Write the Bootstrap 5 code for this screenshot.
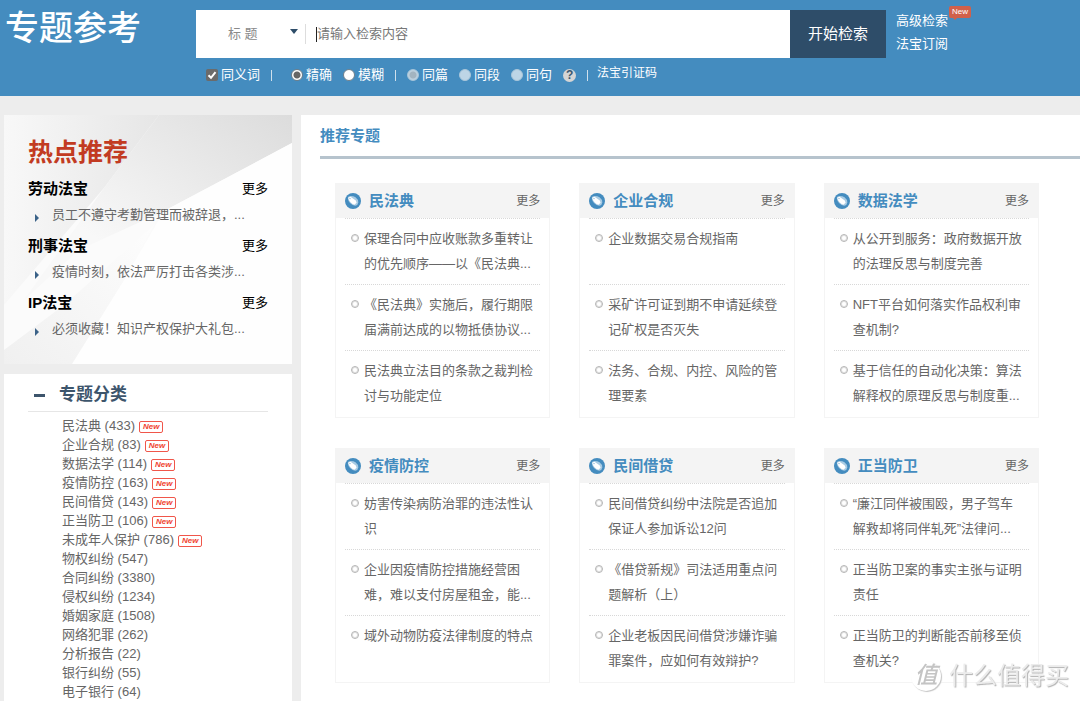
<!DOCTYPE html>
<html lang="zh-CN">
<head>
<meta charset="utf-8">
<meta name="viewport" content="width=device-width, initial-scale=1">
<title>专题参考</title>
<link href="https://cdn.jsdelivr.net/npm/bootstrap@5.3.0/dist/css/bootstrap.min.css" rel="stylesheet">
<style>
  body { font: 13px/26px "Liberation Sans", "Noto Sans CJK SC", sans-serif; background: #ededed; color: #666; }
  a { color: inherit; text-decoration: none; }
  a:hover { text-decoration: underline; }
  h1, h2, h3, ul { margin: 0; padding: 0; }
  ul { list-style: none; }

  /* header */
  .site-head { background: #448cbf; color: #fff; height: 96px; padding-top: 10px; }
  .site-title { width: 196px; padding-left: 5px; font-size: 34px; line-height: 37px; }
  .search-bar { height: 48px; background: #fff; }
  .field-pick { width: 109px; position: relative; }
  .field-pick select { appearance: none; width: 100%; border: 0; background: none; color: #8a8a8a; padding: 0 0 0 32px; height: 24px; outline: 0; }
  .field-pick svg { position: absolute; right: 7px; top: 8px; pointer-events: none; }
  .bar-line { width: 1px; height: 20px; background: #ddd; }
  .text-caret { width: 1px; height: 15px; background: #222; margin-left: 10px; }
  .search-bar input { border: 0; outline: 0; padding: 0; color: #333; }
  .search-bar input::placeholder { color: #777; }
  .go-btn { width: 96px; border: 0; background: #2e4d69; color: #fff; font-size: 15px; }
  .side-links { width: 194px; padding-left: 10px; line-height: 23px; margin-top: -1px; }
  .new-tip { position: absolute; left: 100%; top: -7px; height: 12px; padding: 0 3px; border-radius: 2px; background: #d1604a; color: #fff; font-size: 8px; line-height: 12px; margin-left: 1px; }
  .new-tip::after { content: ""; position: absolute; left: 3px; top: 11px; border: 3px solid transparent; border-top-color: #d1604a; border-bottom: 0; }
  .options { padding-left: 10px; margin-top: 4px; gap: 11px; }
  .choice-set { gap: 11px; }
  .choice { gap: 3px; }
  .choice input { appearance: none; width: 12px; height: 12px; margin: 0; background: #fff; }
  .choice input[type=radio] { border-radius: 50%; border: 1px solid #6f7f8b; }
  .choice input[type=radio]:checked { background: radial-gradient(circle, #666 0 3px, #fff 4px); }
  .choice input[type=radio]:disabled { border-color: #a9c6da; background: #bdd5e6; }
  .choice input[type=radio]:disabled:checked { background: radial-gradient(circle, #a3b4c0 0 3px, #bdd0de 4px); }
  .choice input[type=checkbox] { border-radius: 2px; background: #6b6b6b; }
  .tick-wrap { position: relative; height: 12px; display: flex; }
  .tick-wrap svg { position: absolute; left: 0; top: 0; pointer-events: none; }
  .sep { width: 1px; height: 11px; background: #cfe0ec; }
  .help-dot { width: 13px; height: 13px; padding: 0; border: 0; border-radius: 50%; background: #d5d5d5; color: #3c5870; font-size: 12px; font-weight: bold; line-height: 13px; }
  .cite-link { font-size: 12px; line-height: 22px; margin-left: -2px; align-self: flex-start; }

  /* sidebar */
  .page-body { padding: 19px 0 0 4px; gap: 9px; }
  .side { width: 288px; gap: 10px; }
  .hot { position: relative; padding: 20px 24px 22px; background: #fbfbfb; }
  .hot > svg { position: absolute; left: 0; top: 0; width: 100%; height: 100%; }
  .hot > div { position: relative; }
  .hot h2 { font-size: 25px; line-height: 34px; font-weight: bold; color: #c23b22; margin-bottom: 7px; }
  .hot-group + .hot-group { margin-top: 5px; }
  .hot h3 { font-size: 15px; line-height: 26px; font-weight: bold; }
  .hot-item { padding-left: 24px; position: relative; }
  .hot-item::before { content: ""; position: absolute; left: 7px; top: 12px; border: 4px solid transparent; border-left-color: #3b6288; border-right: 0; }
  .cats { background: #fff; padding: 0 24px; }
  .cats-head { height: 38px; padding: 5px 0 0 6px; gap: 14px; border: 0; border-bottom: 1px solid #e6e6e6; background: none; color: #3d556c; font-size: 17px; font-weight: bold; }
  .cats-head i { width: 11px; height: 3px; background: #3d556c; }
  .cats-list { padding: 4px 0 0 34px; line-height: 19px; }
  .new-box { height: 12px; padding: 0 3px; border: 1px solid #f0564a; border-radius: 2px; color: #f0432f; font-size: 8px; line-height: 10px; font-weight: bold; font-style: italic; margin: 2px 0 0 4px; }

  /* topic cards */
  .topics { background: #fff; min-width: 0; }
  .topics-title { margin-left: 19px; height: 44px; font-size: 15px; line-height: 41px; font-weight: bold; color: #448cbf; border-bottom: 3px solid #b6c3cd; }
  .topic-grid { display: grid; grid-template-columns: repeat(3, 1fr); gap: 30px 29px; padding: 24px 41px 18px 34px; }
  .topic { border: 1px solid #f4f4f4; padding-bottom: 1px; }
  .topic-head { height: 34px; background: #f4f4f4; padding: 0 9px; gap: 8px; }
  .topic-head h3 { font-size: 15px; line-height: 34px; font-weight: bold; color: #448cbf; }
  .topic-head .more { font-size: 12px; }
  .topic ul { padding: 0 9px; }
  .topic li { height: 66px; padding: 7px 4px 0 19px; border-top: 1px dotted #d8d8d8; line-height: 25px; position: relative; overflow: hidden; }
  .topic li::before { content: ""; position: absolute; left: 6px; top: 15px; width: 8px; height: 8px; border: 1px solid #b4b4b4; border-radius: 50%; box-shadow: inset 0 0 0 1px #e2e2e2; }

  .stamp { position: fixed; right: 11px; bottom: 10px; gap: 8px; font-size: 24px; line-height: 30px; color: #ececec; text-shadow: 1px 1px 1px #b0b0b0; pointer-events: none; }
  .stamp b { width: 30px; height: 30px; border-radius: 50%; background: #fff; box-shadow: 1px 1px 1px #c4c4c4; color: #c4c4c4; font-size: 23px; font-weight: 500; line-height: 28px; font-style: italic; text-align: center; text-shadow: none; }
</style>
</head>
<body class="min-vh-100 d-flex flex-column">

<svg class="d-none">
  <symbol id="tag" viewBox="0 0 16 16">
    <circle cx="8" cy="8" r="8" fill="#448cbf"/>
    <path d="M2.800 5Q3 3.500 4.500 3.200Q8 2.800 10.500 4.300Q13.500 6.500 13.300 9.500Q13 12.300 10.300 12.800Q7.500 12.500 5 10Q3 7.500 2.800 5Z" fill="#a9cbe3"/>
    <path d="M3.200 4.800L5.500 3.800L10.800 7.600L11.600 9.800L9.500 11.800Q7.500 11.300 5.500 9.300Q3.600 7.300 3.200 4.800Z" fill="#fff"/>
    <circle cx="5" cy="5.600" r=".7" fill="#7fb0d5"/>
  </symbol>
</svg>

<header class="site-head">
  <form class="d-flex" onsubmit="return false">
    <h1 class="site-title flex-shrink-0">专题参考</h1>
    <div class="flex-grow-1">
      <div class="search-bar d-flex align-items-center">
        <div class="field-pick flex-shrink-0">
          <select aria-label="检索字段"><option>标 题</option></select>
          <svg width="8" height="5"><path d="M0 0H8L4 5Z" fill="#2e4d69"/></svg>
        </div>
        <span class="bar-line"></span>
        <span class="text-caret"></span>
        <input class="flex-grow-1" type="text" aria-label="检索内容" placeholder="请输入检索内容">
        <button class="go-btn align-self-stretch" type="submit">开始检索</button>
      </div>
      <div class="options d-flex align-items-center">
        <label class="choice d-flex align-items-center"><span class="tick-wrap"><input type="checkbox" checked><svg width="12" height="12"><path d="M2.500 6.200L5 8.800L9.500 3.200" fill="none" stroke="#fff" stroke-width="2"/></svg></span>同义词</label>
        <span class="sep me-2"></span>
        <div class="choice-set d-flex">
          <label class="choice d-flex align-items-center"><input type="radio" name="match" checked>精确</label>
          <label class="choice d-flex align-items-center"><input type="radio" name="match">模糊</label>
        </div>
        <span class="sep"></span>
        <div class="choice-set d-flex">
          <label class="choice d-flex align-items-center"><input type="radio" name="scope" checked disabled>同篇</label>
          <label class="choice d-flex align-items-center"><input type="radio" name="scope" disabled>同段</label>
          <label class="choice d-flex align-items-center"><input type="radio" name="scope" disabled>同句</label>
        </div>
        <button class="help-dot" type="button">?</button>
        <span class="sep"></span>
        <a href="#" class="cite-link">法宝引证码</a>
      </div>
    </div>
    <div class="side-links flex-shrink-0">
      <div><a href="#" class="position-relative">高级检索<span class="new-tip">New</span></a></div>
      <div><a href="#">法宝订阅</a></div>
    </div>
  </form>
</header>

<div class="page-body d-flex flex-grow-1">
  <aside class="side d-flex flex-column flex-shrink-0">
    <section class="hot">
      <svg viewBox="0 0 288 249" preserveAspectRatio="none" aria-hidden="true">
        <defs>
          <linearGradient id="g1" x1="0" y1="1" x2="1" y2="0"><stop offset=".3" stop-color="#f8f8f8"/><stop offset="1" stop-color="#dcdcdc"/></linearGradient>
          <linearGradient id="g2" x1="0" y1="0" x2="1" y2="0"><stop offset="0" stop-color="#f8f8f8"/><stop offset="1" stop-color="#e6e6e6"/></linearGradient>
          <linearGradient id="g3" x1="0" y1="1" x2="1" y2="0"><stop offset="0" stop-color="#f0f0f0"/><stop offset="1" stop-color="#fdfdfd"/></linearGradient>
        </defs>
        <path d="M0 0H155L100 73L0 190Z" fill="url(#g2)"/>
        <path d="M155 0H288V28L160 96L75 135L20 185L100 73Z" fill="url(#g1)"/>
        <path d="M288 28V249H68L120 165L160 96Z" fill="#fefefe"/>
        <path d="M0 235L60 190L150 110L120 165L68 249H0Z" fill="url(#g3)"/>
      </svg>
      <div>
        <h2>热点推荐</h2>
        <div class="hot-group">
          <div class="d-flex justify-content-between text-black"><h3>劳动法宝</h3><a href="#">更多</a></div>
          <div class="hot-item text-nowrap"><a href="#">员工不遵守考勤管理而被辞退，...</a></div>
        </div>
        <div class="hot-group">
          <div class="d-flex justify-content-between text-black"><h3>刑事法宝</h3><a href="#">更多</a></div>
          <div class="hot-item text-nowrap"><a href="#">疫情时刻，依法严厉打击各类涉...</a></div>
        </div>
        <div class="hot-group">
          <div class="d-flex justify-content-between text-black"><h3>IP法宝</h3><a href="#">更多</a></div>
          <div class="hot-item text-nowrap"><a href="#">必须收藏！知识产权保护大礼包...</a></div>
        </div>
      </div>
    </section>
    <section class="cats flex-grow-1">
      <button class="cats-head d-flex align-items-center w-100" type="button"><i></i>专题分类</button>
      <ul class="cats-list">
        <li class="d-flex align-items-center"><a href="#">民法典 (433)</a><span class="new-box">New</span></li>
        <li class="d-flex align-items-center"><a href="#">企业合规 (83)</a><span class="new-box">New</span></li>
        <li class="d-flex align-items-center"><a href="#">数据法学 (114)</a><span class="new-box">New</span></li>
        <li class="d-flex align-items-center"><a href="#">疫情防控 (163)</a><span class="new-box">New</span></li>
        <li class="d-flex align-items-center"><a href="#">民间借贷 (143)</a><span class="new-box">New</span></li>
        <li class="d-flex align-items-center"><a href="#">正当防卫 (106)</a><span class="new-box">New</span></li>
        <li class="d-flex align-items-center"><a href="#">未成年人保护 (786)</a><span class="new-box">New</span></li>
        <li><a href="#">物权纠纷 (547)</a></li>
        <li><a href="#">合同纠纷 (3380)</a></li>
        <li><a href="#">侵权纠纷 (1234)</a></li>
        <li><a href="#">婚姻家庭 (1508)</a></li>
        <li><a href="#">网络犯罪 (262)</a></li>
        <li><a href="#">分析报告 (22)</a></li>
        <li><a href="#">银行纠纷 (55)</a></li>
        <li><a href="#">电子银行 (64)</a></li>
      </ul>
    </section>
  </aside>

  <main class="topics flex-grow-1">
    <h2 class="topics-title">推荐专题</h2>
    <div class="topic-grid">
      <section class="topic">
        <div class="topic-head d-flex align-items-center"><svg width="16" height="16"><use href="#tag"/></svg><h3>民法典</h3><a href="#" class="more ms-auto">更多</a></div>
        <ul>
          <li><a href="#">保理合同中应收账款多重转让的优先顺序——以《民法典...</a></li>
          <li><a href="#">《民法典》实施后，履行期限届满前达成的以物抵债协议...</a></li>
          <li><a href="#">民法典立法目的条款之裁判检讨与功能定位</a></li>
        </ul>
      </section>
      <section class="topic">
        <div class="topic-head d-flex align-items-center"><svg width="16" height="16"><use href="#tag"/></svg><h3>企业合规</h3><a href="#" class="more ms-auto">更多</a></div>
        <ul>
          <li><a href="#">企业数据交易合规指南</a></li>
          <li><a href="#">采矿许可证到期不申请延续登记矿权是否灭失</a></li>
          <li><a href="#">法务、合规、内控、风险的管理要素</a></li>
        </ul>
      </section>
      <section class="topic">
        <div class="topic-head d-flex align-items-center"><svg width="16" height="16"><use href="#tag"/></svg><h3>数据法学</h3><a href="#" class="more ms-auto">更多</a></div>
        <ul>
          <li><a href="#">从公开到服务：政府数据开放的法理反思与制度完善</a></li>
          <li><a href="#">NFT平台如何落实作品权利审查机制?</a></li>
          <li><a href="#">基于信任的自动化决策：算法解释权的原理反思与制度重...</a></li>
        </ul>
      </section>
      <section class="topic">
        <div class="topic-head d-flex align-items-center"><svg width="16" height="16"><use href="#tag"/></svg><h3>疫情防控</h3><a href="#" class="more ms-auto">更多</a></div>
        <ul>
          <li><a href="#">妨害传染病防治罪的违法性认识</a></li>
          <li><a href="#">企业因疫情防控措施经营困难，难以支付房屋租金，能...</a></li>
          <li><a href="#">域外动物防疫法律制度的特点</a></li>
        </ul>
      </section>
      <section class="topic">
        <div class="topic-head d-flex align-items-center"><svg width="16" height="16"><use href="#tag"/></svg><h3>民间借贷</h3><a href="#" class="more ms-auto">更多</a></div>
        <ul>
          <li><a href="#">民间借贷纠纷中法院是否追加保证人参加诉讼12问</a></li>
          <li><a href="#">《借贷新规》司法适用重点问题解析（上）</a></li>
          <li><a href="#">企业老板因民间借贷涉嫌诈骗罪案件，应如何有效辩护?</a></li>
        </ul>
      </section>
      <section class="topic">
        <div class="topic-head d-flex align-items-center"><svg width="16" height="16"><use href="#tag"/></svg><h3>正当防卫</h3><a href="#" class="more ms-auto">更多</a></div>
        <ul>
          <li><a href="#">“廉江同伴被围殴，男子驾车解救却将同伴轧死”法律问...</a></li>
          <li><a href="#">正当防卫案的事实主张与证明责任</a></li>
          <li><a href="#">正当防卫的判断能否前移至侦查机关?</a></li>
        </ul>
      </section>
    </div>
  </main>
</div>

<div class="stamp d-flex align-items-center"><b>值</b><span>什么值得买</span></div>

<script src="https://cdn.jsdelivr.net/npm/bootstrap@5.3.0/dist/js/bootstrap.bundle.min.js"></script>
</body>
</html>
